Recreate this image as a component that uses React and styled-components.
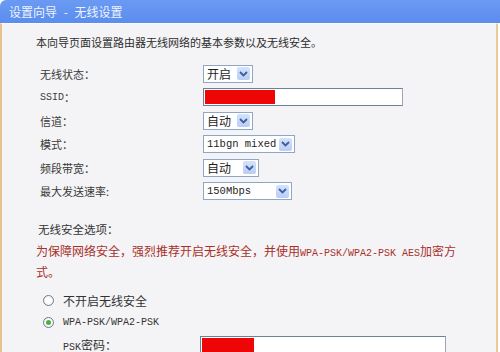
import React from "react";
import styled, { createGlobalStyle } from "styled-components";

const GlobalStyle = createGlobalStyle`
  html, body {
    margin: 0;
    padding: 0;
    background: #ffffff;
  }
  body {
    font-family: "Noto Sans CJK SC", "Liberation Sans", sans-serif;
    font-size: 11px;
    color: #333;
  }
`;

const rows = [
  { label: "无线状态：", kind: "select", value: "开启", width: 50 },
  { label: "SSID：", kind: "input", width: 200, fill: 70 },
  { label: "信道：", kind: "select", value: "自动", width: 50 },
  { label: "模式：", kind: "select", value: "11bgn mixed", width: 92, mono: true },
  { label: "频段带宽：", kind: "select", value: "自动", width: 56 },
  { label: "最大发送速率:", kind: "select", value: "150Mbps", width: 89, mono: true },
];

const Chevron = () => (
  <svg width="9" height="6" viewBox="0 0 9 6">
    <path d="M1 1 L4.5 4.5 L8 1" fill="none" stroke="#3f5f9a" strokeWidth="1.8" />
  </svg>
);

const Select = ({ value, width, mono }) => (
  <SelectBox $width={width}>
    <SelectText $mono={mono}>{value}</SelectText>
    <ArrowButton>
      <Chevron />
    </ArrowButton>
  </SelectBox>
);

const TextInput = ({ width, fill }) => (
  <InputBox $width={width}>
    <RedMask $width={fill} />
  </InputBox>
);

const App = () => {
  return (
    <>
      <GlobalStyle />
      <Frame>
        <TitleBar>设置向导 - 无线设置</TitleBar>
        <Panel>
          <Intro>本向导页面设置路由器无线网络的基本参数以及无线安全。</Intro>
          <FormGrid>
            {rows.map((row) => (
              <React.Fragment key={row.label}>
                <Label>
                  {row.label.startsWith("SSID") ? (
                    <>
                      <Mono>SSID</Mono>：
                    </>
                  ) : (
                    row.label
                  )}
                </Label>
                <Control>
                  {row.kind === "select" ? (
                    <Select value={row.value} width={row.width} mono={row.mono} />
                  ) : (
                    <TextInput width={row.width} fill={row.fill} />
                  )}
                </Control>
              </React.Fragment>
            ))}
          </FormGrid>

          <Heading>无线安全选项：</Heading>
          <Warning>
            为保障网络安全，强烈推荐开启无线安全，并使用<Mono>WPA-PSK/WPA2-PSK AES</Mono>加密方
            <br />
            式。
          </Warning>

          <RadioList>
            <RadioRow>
              <Radio />
              <span>不开启无线安全</span>
            </RadioRow>
            <RadioRow>
              <Radio $checked />
              <Mono>WPA-PSK/WPA2-PSK</Mono>
            </RadioRow>
            <PskRow>
              <span>
                <Mono>PSK</Mono>密码：
              </span>
              <TextInput width={246} fill={52} />
            </PskRow>
          </RadioList>
        </Panel>
      </Frame>
    </>
  );
};

const Frame = styled.div`
  width: 500px;
  height: 352px;
  overflow: hidden;
  display: flex;
  flex-direction: column;
`;

const TitleBar = styled.div`
  height: 24px;
  line-height: 23px;
  padding-left: 9px;
  background: linear-gradient(#6a9af2, #5b8dee);
  border-top-left-radius: 6px;
  color: #eef3ff;
  font-size: 12px;
  word-spacing: 4px;
`;

const Panel = styled.div`
  flex: 1;
  width: 494px;
  background: #f4f4f6;
  border-left: 2px solid #e8c18e;
  border-right: 2px solid #ecc99a;
  border-top: 1px solid #fbfbfd;
`;

const Intro = styled.div`
  margin: 8px 0 0 34px;
  line-height: 20px;
  color: #2d2d2d;
`;

const FormGrid = styled.div`
  display: grid;
  grid-template-columns: 163px auto;
  grid-auto-rows: 23.5px;
  margin: 10px 0 0 38px;
`;

const Label = styled.div`
  display: flex;
  align-items: center;
  color: #3a3a3a;
`;

const Mono = styled.span`
  font-family: "Liberation Mono", "DejaVu Sans Mono", monospace;
  font-size: 10px;
`;

const Control = styled.div`
  display: flex;
  align-items: center;
`;

const SelectBox = styled.div`
  width: ${(p) => p.$width}px;
  height: 18px;
  box-sizing: border-box;
  border: 1px solid #8ea7c4;
  background: #fff;
  display: flex;
  align-items: center;
  justify-content: space-between;
  padding: 0 2px 0 3px;
`;

const SelectText = styled.span`
  font-family: ${(p) =>
    p.$mono
      ? `"Liberation Mono", "DejaVu Sans Mono", monospace`
      : `"Noto Sans CJK SC", sans-serif`};
  font-size: ${(p) => (p.$mono ? "10.5px" : "12px")};
  color: #1e1e1e;
  white-space: nowrap;
`;

const ArrowButton = styled.span`
  width: 13px;
  height: 13px;
  border-radius: 2px;
  background: linear-gradient(#d4e2fd, #b9cdf6);
  display: flex;
  align-items: center;
  justify-content: center;
`;

const InputBox = styled.div`
  width: ${(p) => p.$width}px;
  height: 18px;
  box-sizing: border-box;
  border: 1px solid #6f7f94;
  border-right-color: #9aa8b8;
  background: #fff;
  padding: 1px;
  display: flex;
`;

const RedMask = styled.div`
  width: ${(p) => p.$width}px;
  background: #ee0505;
`;

const Heading = styled.div`
  margin: 16px 0 0 36px;
  line-height: 20px;
  font-size: 11.5px;
  color: #333;
`;

const Warning = styled.div`
  margin: 3px 0 0 34px;
  line-height: 18px;
  font-size: 12px;
  color: #a8302a;
`;

const RadioList = styled.div`
  margin: 8px 0 0 41px;
  display: flex;
  flex-direction: column;
  font-size: 12px;
`;

const RadioRow = styled.div`
  height: 22.5px;
  display: flex;
  align-items: center;
  gap: 9px;
  color: #333;
`;

const Radio = styled.span`
  width: 11px;
  height: 11px;
  box-sizing: border-box;
  border-radius: 50%;
  border: 1px solid #6b7b8c;
  background: radial-gradient(circle, #ffffff 40%, #e6e9ee 100%);
  display: flex;
  align-items: center;
  justify-content: center;
  &::after {
    content: "";
    width: 5px;
    height: 5px;
    border-radius: 50%;
    background: ${(p) => (p.$checked ? "#4fae3f" : "transparent")};
  }
`;

const PskRow = styled.div`
  height: 21px;
  display: grid;
  grid-template-columns: 137px auto;
  align-items: center;
  padding-left: 20px;
  color: #333;
`;

export default App;
